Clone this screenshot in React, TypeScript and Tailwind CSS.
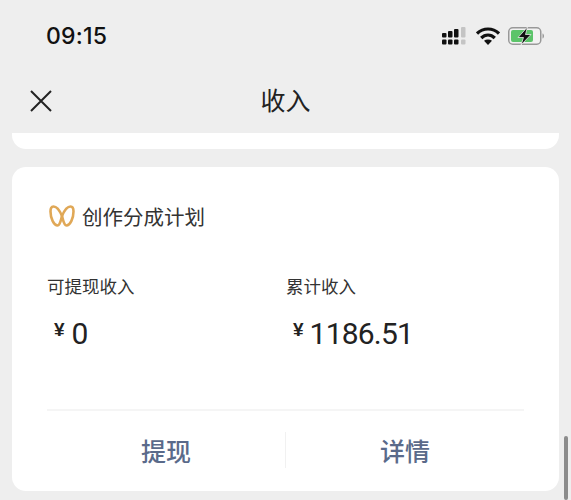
const cjk = "font-['Noto_Sans_CJK_SC','Noto_Sans_CJK_SC',sans-serif]";

function StatusIcons() {
  return (
    <div className="flex items-center">
      <svg width="26" height="20" viewBox="0 0 26 20">
        <g fill="#111">
          <rect x="1" y="7" width="4.5" height="4.5" rx="1" />
          <rect x="1" y="13.5" width="4.5" height="5" rx="1" />
          <rect x="7" y="5" width="4.5" height="6.5" rx="1" />
          <rect x="7" y="13.5" width="4.5" height="5" rx="1" />
          <rect x="13" y="3" width="4.5" height="8.5" rx="1" />
          <rect x="13" y="13.5" width="4.5" height="5" rx="1" />
        </g>
        <g fill="#c4c4c4">
          <rect x="20" y="1" width="4.5" height="10.5" rx="1" />
          <rect x="20" y="13.5" width="4.5" height="5" rx="1" />
        </g>
      </svg>
      <svg width="24" height="18" viewBox="0 0 24 18" fill="none" stroke="#111" strokeWidth="3.2" className="ml-[9px]">
        <path d="M1 6.5C7.2 0.5 16.8 0.5 23 6.5" />
        <path d="M5.2 11C9.2 7 14.8 7 18.8 11" />
        <path d="M12 18L8 13.8C10.2 12.2 13.8 12.2 16 13.8Z" fill="#111" stroke="none" />
      </svg>
      <svg width="37" height="20" viewBox="0 0 37 20" className="ml-[8px]">
        <rect x="0.75" y="1.75" width="32" height="16.5" rx="4" fill="#f2f2f2" stroke="#999" strokeWidth="1.5" />
        <rect x="3" y="4" width="22" height="12" rx="2" fill="#5cc46a" />
        <path d="M34.5 7.5C36.5 8 36.5 12 34.5 12.5Z" fill="#999" />
        <path d="M19.5 1L10 11.5H15.5L13 19L23 8.5H17.5Z" fill="#111" stroke="#f2f2f2" strokeWidth="0.75" />
      </svg>
    </div>
  );
}

function Logo() {
  return (
    <svg width="26" height="22" viewBox="0 0 26 22" fill="none" stroke="#e0a857" strokeWidth="2.6">
      <path d="M13 11C10.5 5 7.5 1.5 4.5 1.5C2.3 1.5 1.5 3.5 1.5 6.5C1.5 13.5 5 20.5 8.5 20.5C11 20.5 12 15 13 11Z" />
      <path d="M13 11C15.5 5 18.5 1.5 21.5 1.5C23.7 1.5 24.5 3.5 24.5 6.5C24.5 13.5 21 20.5 17.5 20.5C15 20.5 14 15 13 11Z" />
    </svg>
  );
}

function Amount({ value, gap }: { value: string; gap: string }) {
  return (
    <div className={`flex items-start pl-[7px] mt-[16px] h-[40px] ${gap}`}>
      <span className="text-[19px] leading-[32px] text-[#222] font-['Liberation_Sans',sans-serif] font-bold">¥</span>
      <span className="text-[30px] leading-[40px] text-[#222] font-['Roboto',sans-serif] tracking-[-0.8px]">{value}</span>
    </div>
  );
}

export default function App() {
  return (
    <div className={`relative w-[571px] h-[500px] overflow-hidden bg-[#eeeeee] ${cjk}`}>
      <div className="flex items-center justify-between h-[72px] pl-[46px] pr-[26px]">
        <span className="text-[23px] font-medium text-[#111] font-['Inter',sans-serif] tracking-[0.2px]">09:15</span>
        <StatusIcons />
      </div>

      <div className="relative flex items-center justify-center h-[61px] pb-[8px]">
        <svg width="24" height="24" viewBox="0 0 24 24" fill="none" stroke="#222" strokeWidth="2" className="absolute left-[29px] top-[17px]">
          <path d="M2 2L22 22M22 2L2 22" />
        </svg>
        <span className="text-[25px] leading-[32px] text-[#222]">收入</span>
      </div>

      <div className="mx-[12px] h-[16px] bg-white rounded-b-[14px]" />

      <div className="mx-[12px] mt-[18px] h-[324px] bg-white rounded-[14px] pt-[37px] px-[35px]">
        <div className="flex items-center gap-[7px] h-[24px] pl-[2px]">
          <Logo />
          <span className="text-[20.5px] leading-[24px] text-[#333]">创作分成计划</span>
        </div>
        <div className="flex mt-[46px]">
          <div className="w-[239px]">
            <div className="text-[17.5px] leading-[24px] text-[#333]">可提现收入</div>
            <Amount value="0" gap="gap-[7px]" />
          </div>
          <div>
            <div className="text-[17.5px] leading-[24px] text-[#333]">累计收入</div>
            <Amount value="1186.51" gap="gap-[6px]" />
          </div>
        </div>
        <div className="mt-[55px] h-[2px] bg-[#f5f5f5]" />
        <div className="flex items-center h-[79px] pb-[2px]">
          <div className="w-[238px] text-center text-[25px] leading-[36px] font-medium text-[#5a6a8a]">提现</div>
          <div className="w-[1px] h-[36px] bg-[#f1f1f1]" />
          <div className="flex-1 text-center text-[25px] leading-[36px] font-medium text-[#5a6a8a]">详情</div>
        </div>
      </div>

      <div className="absolute right-[3px] top-[436px] w-[4px] h-[64px] rounded-full bg-[#8c8c8c]" />
    </div>
  );
}
